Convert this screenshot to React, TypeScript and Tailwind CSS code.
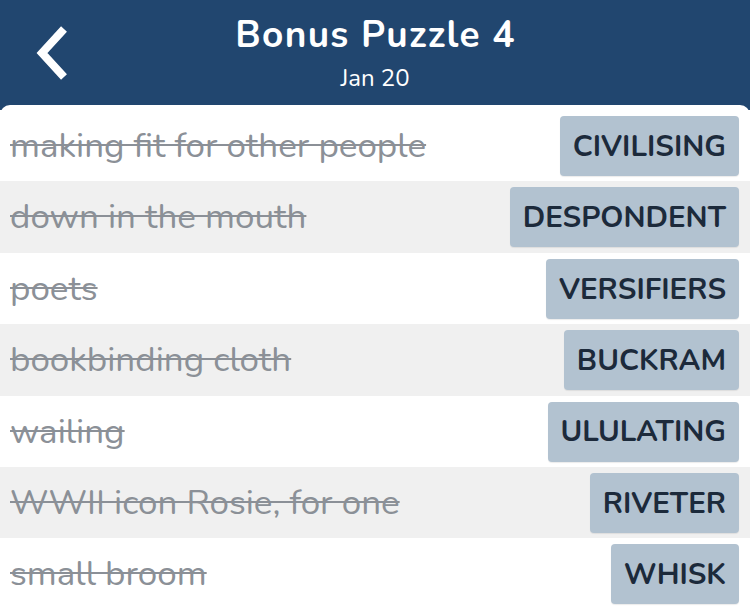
const rows = [
  { clue: 'making fit for other people', answer: 'CIVILISING' },
  { clue: 'down in the mouth', answer: 'DESPONDENT' },
  { clue: 'poets', answer: 'VERSIFIERS' },
  { clue: 'bookbinding cloth', answer: 'BUCKRAM' },
  { clue: 'wailing', answer: 'ULULATING' },
  { clue: 'WWII icon Rosie, for one', answer: 'RIVETER' },
  { clue: 'small broom', answer: 'WHISK' },
];

export default function App() {
  return (
    <div
      className="w-[750px] h-[607px] overflow-hidden bg-[#21466f]"
      style={{ fontFamily: 'Nunito, Lato, sans-serif' }}
    >
      <header className="relative h-[105px] flex flex-col items-center text-white">
        <button className="absolute left-[34px] top-[25px]" aria-label="Back">
          <svg width="40" height="56" viewBox="0 0 40 56">
            <path d="M30 4 L8 28 L30 52" fill="none" stroke="white" strokeWidth="8" strokeLinecap="butt" strokeLinejoin="miter" />
          </svg>
        </button>
        <h1 className="mt-[13px] pl-[1px] text-[37px] leading-[44px] font-bold tracking-[1.3px]">Bonus Puzzle 4</h1>
        <p className="mt-[6px] text-[24px] leading-[30px]">Jan 20</p>
      </header>
      <main className="bg-white rounded-t-[10px] pt-[5px]">
        {rows.map((r, i) => (
          <div
            key={r.answer}
            className={`h-[71.4px] flex items-start justify-between pl-[10px] pr-[11px] ${i % 2 === 1 ? 'bg-[#f0f0f0]' : 'bg-white'}`}
          >
            <span className="mt-[14px] text-[35px] leading-[44px] text-[#8b9097] line-through decoration-[1.5px]">
              {r.clue}
            </span>
            <span className="mt-[6px] h-[60px] flex items-center px-[13px] rounded-[4px] bg-[#b2c2d0] shadow-[0_1px_1px_rgba(0,0,0,0.08)] text-[29.5px] font-bold text-[#1c2a3b]">
              {r.answer}
            </span>
          </div>
        ))}
      </main>
    </div>
  );
}
